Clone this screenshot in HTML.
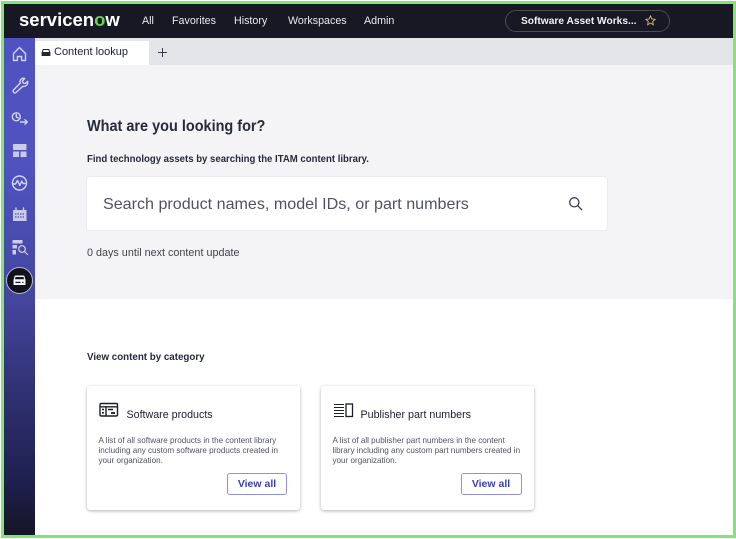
<!DOCTYPE html>
<html><head><meta charset="utf-8"><style>
*{box-sizing:border-box}
html,body{margin:0;padding:0;width:736px;height:539px;overflow:hidden;background:#fff;font-family:"Liberation Sans",sans-serif;color:#1d2332}
.a{position:absolute;white-space:nowrap}
.nav{color:#e8e8ec;font-size:10.7px;top:15px;line-height:13px}
.card{position:absolute;top:386px;width:213px;height:124px;background:#fff;border-radius:3px;box-shadow:0 1px 3px rgba(30,30,50,.35)}
.t{font-size:10.7px;left:40px;top:23px;line-height:13px;color:#1b1f2c}
.d{font-size:8.1px;left:12px;top:50px;line-height:10.2px;color:#50535f}
.b{position:absolute;top:87px;height:22px;border:1px solid #8f91d6;border-radius:3px;color:#3b3fb5;font-size:10.5px;font-weight:bold;text-align:center;line-height:20px}
.sx{transform-origin:0 50%}
</style></head><body>
<!-- header -->
<div class="a" style="left:3px;top:3px;width:730px;height:35px;background:#181825"></div>
<div class="a" style="left:19px;top:9px;font-size:18.5px;line-height:22px;color:#fff;font-weight:bold">servicen<span style="color:#62d84e">o</span>w</div>
<div class="a nav" style="left:142px">All</div>
<div class="a nav" style="left:172px">Favorites</div>
<div class="a nav" style="left:234px">History</div>
<div class="a nav" style="left:288px">Workspaces</div>
<div class="a nav" style="left:364px">Admin</div>
<div class="a" style="left:505px;top:10px;width:165px;height:22px;border:1px solid #4a4a58;border-radius:11px"></div>
<div class="a" style="left:521px;top:15px;font-size:10.2px;line-height:13px;font-weight:bold;color:#f0f0f2">Software Asset Works...</div>
<svg class="a" style="left:645px;top:15px" width="11" height="11" viewBox="0 0 12 12"><path d="M6 1l1.500 3.300 3.500.4-2.600 2.400.7 3.500L6 8.900l-3.100 1.700.7-3.500L1 4.700l3.500-.4z" fill="none" stroke="#d9b878" stroke-width="1"/></svg>
<!-- tab bar -->
<div class="a" style="left:35px;top:38px;width:698px;height:27px;background:#e4e5e9"></div>
<div class="a" style="left:35px;top:41px;width:114px;height:24px;background:#fff"></div>
<svg class="a" style="left:41px;top:48px" width="10" height="9" viewBox="0 0 10 9"><path d="M1.800 1h6.400l1.200 3.500V8H.6V4.500z" fill="#23252f"/><path d="M2.500 2h5l.6 2H1.900z" fill="#fff"/></svg>
<div class="a" style="left:54px;top:46px;font-size:11px;line-height:13px;color:#1d2030">Content lookup</div>
<svg class="a" style="left:157px;top:47px" width="11" height="11" viewBox="0 0 11 11"><path d="M5.500 1v9M1 5.500h9" stroke="#3a3d48" stroke-width="1"/></svg>
<!-- hero -->
<div class="a" style="left:35px;top:65px;width:698px;height:234px;background:#f4f4f7"></div>
<div class="a sx" style="left:87px;top:117px;font-size:16px;line-height:19px;font-weight:bold;color:#262b3a;transform:scaleX(.904)">What are you looking for?</div>
<div class="a sx" style="left:87px;top:153px;font-size:10.5px;line-height:13px;font-weight:bold;color:#262b3a;transform:scaleX(.913)">Find technology assets by searching the ITAM content library.</div>
<div class="a" style="left:87px;top:177px;width:520px;height:53px;background:#fff;border-radius:2px;box-shadow:0 0 1px rgba(40,40,70,.25)"></div>
<div class="a" style="left:103px;top:195px;font-size:16.1px;line-height:19px;color:#50535f">Search product names, model IDs, or part numbers</div>
<svg class="a" style="left:568px;top:196px" width="15" height="15" viewBox="0 0 15 15"><circle cx="6.300" cy="6.300" r="4.600" fill="none" stroke="#3d404c" stroke-width="1.300"/><path d="M9.700 9.700L14 14" stroke="#3d404c" stroke-width="1.300"/></svg>
<div class="a" style="left:87px;top:246px;font-size:10.8px;line-height:14px;color:#40434f">0 days until next content update</div>
<!-- sidebar -->
<div class="a" style="left:4px;top:38px;width:31px;height:497px;background:linear-gradient(#4f52bf 0,#4f52bf 130px,#44459d 262px,#2e2f70 362px,#1e2050 442px,#141526 497px)"></div>
<svg class="a" style="left:4px;top:38px" width="31" height="270" viewBox="0 0 31 270" fill="none" stroke="#d3d4ee" stroke-width="1.400" stroke-linejoin="round" stroke-linecap="round">
<path d="M9.500 15.500L15.500 9.500L21.500 15.500V22.500H17.600V18.500H13.400V22.500H9.500Z"/>
<path d="M9.500 52l6.800-7c-1-3 1.500-5.500 4.500-4.500l-2.500 2.500.8 2 2.200.5 2.300-2.200c.8 3-1.700 5.700-4.800 5L12 54.500c-1.500 1.300-3.700-.8-2.500-2.500z"/>
<circle cx="12.300" cy="78.800" r="4"/><path d="M12.300 76.500v2.500l2 1M16.500 84h6.500M21 81.800l2.300 2.200-2.300 2.200"/>
<path d="M9 106h13.500v6H9zM9 113.500h6v5.500H9zM16.500 113.500h6v5.500h-6z" fill="#c9cbe8" stroke="none"/>
<circle cx="15.500" cy="145" r="7"/><path d="M9.500 146h2l2-3.500 2.300 5 2-4.500 1.200 2.500h2"/>
<path d="M9 172h13.500v11H9z" fill="#c9cbe8" stroke="none"/><path d="M12 170v2.500M19.500 170v2.500" stroke="#c9cbe8"/><path d="M11 176h9.500M11 179h9.500" stroke="#5155b5" stroke-dasharray="1.500 1" stroke-linecap="butt" stroke-width="1.200"/>
<path d="M8.500 202h10v3.500h-10zM8.500 207h4.500v3.500H8.500zM8.500 212h3.500v4.500H8.500z" fill="#c9cbe8" stroke="none"/><circle cx="18" cy="211" r="3.300" stroke-width="1.200"/><path d="M20.500 213.500l3 3" stroke-width="1.200"/>
</svg>
<div class="a" style="left:6px;top:266.500px;width:27px;height:27px;border-radius:50%;background:#11121d;border:1px solid #b8b8d0"></div>
<svg class="a" style="left:13px;top:275px" width="13" height="11" viewBox="0 0 13 11"><path d="M2.500.5h8q.8 0 1 .8l1 3.700v5H.5V5l1-3.700q.2-.8 1-.8z" fill="#f4f4f8"/><path d="M2.500 2h8l.5 2.300H2z" fill="#11121d"/><path d="M2.500 6.800h5v1.200h-5z" fill="#11121d"/><path d="M9.300 6.800h1.200v1.200H9.300z" fill="#11121d"/></svg>
<!-- category -->
<div class="a sx" style="left:87px;top:351px;font-size:10.5px;line-height:13px;font-weight:bold;color:#262b3a;transform:scaleX(.93)">View content by category</div>
<div class="card" style="left:86.5px">
<svg class="a" style="left:12px;top:16px" width="20" height="16" viewBox="0 0 20 16" fill="none" stroke="#1b1e28" stroke-width="1.400"><rect x="1" y="1.500" width="17.500" height="12.500" rx="1.200"/><path d="M1 4.800h17.500M7 4.800V14"/><path d="M3 7.500h2M3 10.800h2M9 7.500h5" stroke-width="1.500"/><path d="M12 11h4" stroke-width="1.800"/></svg>
<div class="a t">Software products</div>
<div class="a d">A list of all software products in the content library<br>including any custom software products created in<br>your organization.</div>
<div class="b" style="left:140.5px;width:60px">View all</div>
</div>
<div class="card" style="left:320.5px">
<svg class="a" style="left:12px;top:17px" width="21" height="15" viewBox="0 0 21 15" fill="none" stroke="#1b1e28" stroke-width="1.100"><path d="M1 1.500h10M1 4.500h10M1 7.500h10M1 10.500h10M1 13.500h10"/><rect x="13" y="1" width="6.500" height="12.500" stroke-width="1.300"/></svg>
<div class="a t">Publisher part numbers</div>
<div class="a d">A list of all publisher part numbers in the content<br>library including any custom part numbers created in<br>your organization.</div>
<div class="b" style="left:140px;width:61px">View all</div>
</div>
<!-- green frame -->
<div class="a" style="left:1px;top:.5px;width:734.5px;height:537px;border:3px solid #7fe870;pointer-events:none"></div>
</body></html>
